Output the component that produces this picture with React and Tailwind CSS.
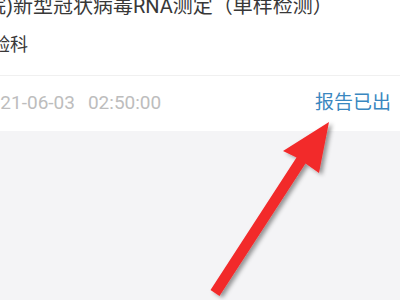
export default function App() {
  return (
    <div className="relative w-[400px] h-[300px] overflow-hidden bg-[#f4f4f6] font-['Roboto','Noto_Sans_CJK_SC',sans-serif]">
      <div className="bg-white">
        {/* title, clipped at the left like the original crop */}
        <div className="-mt-[4px] ml-[-14px] whitespace-nowrap text-[20px] leading-[20px] text-[#383838]">
          院)新型冠状病毒RNA测定（单样检测）
        </div>
        <div className="mt-[17px] ml-[-26px] whitespace-nowrap text-[18px] leading-[24px] text-[#383838]">
          检验科
        </div>
        <div className="mt-[18px] h-[56px] border-t border-[#f0f0f0] flex items-center justify-between pr-[9px]">
          <div className="ml-[-21px] flex gap-[13px] whitespace-nowrap text-[19px] text-[#bdbdbd]">
            <span>2021-06-03</span>
            <span>02:50:00</span>
          </div>
          <span className="text-[19px] text-[#3a87c0]">报告已出</span>
        </div>
      </div>

      {/* red annotation arrow */}
      <svg className="absolute inset-0 pointer-events-none" width="400" height="300" viewBox="0 0 400 300">
        <defs>
          <filter id="arrowShadow" x="-20%" y="-20%" width="140%" height="140%">
            <feDropShadow dx="3" dy="2" stdDeviation="2" floodColor="#000000" floodOpacity="0.4" />
          </filter>
        </defs>
        <polygon
          points="210.5,290 296.5,157.5 283,151 329,122 319,173 305.5,163.5 219.5,296"
          fill="#f22a2c"
          filter="url(#arrowShadow)"
        />
      </svg>
    </div>
  );
}
